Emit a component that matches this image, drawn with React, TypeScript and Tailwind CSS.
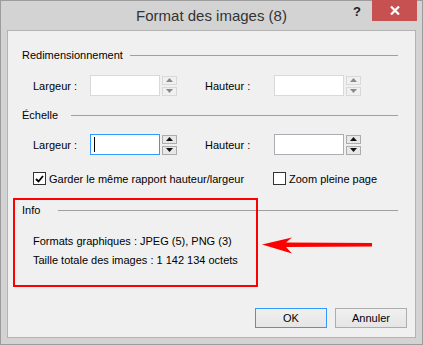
import React from "react";

function Spinner({ enabled }: { enabled: boolean }) {
  const btn = enabled
    ? "border-[#acacac] bg-[#e8e8e8]"
    : "border-[#d9d9d9] bg-[#f0f0f0]";
  const fill = enabled ? "#111111" : "#8a8a8a";
  return (
    <div className="ml-[2px] flex h-[21px] w-[15px] flex-col justify-center gap-[2px]">
      <div className={`flex h-[9px] items-center justify-center border ${btn}`}>
        <svg width="7" height="4" viewBox="0 0 7 4">
          <polygon points="3.5,0 7,4 0,4" fill={fill} />
        </svg>
      </div>
      <div className={`flex h-[9px] items-center justify-center border ${btn}`}>
        <svg width="7" height="4" viewBox="0 0 7 4">
          <polygon points="0,0 7,0 3.5,4" fill={fill} />
        </svg>
      </div>
    </div>
  );
}

function GroupHeader({ label, w }: { label: string; w: string }) {
  return (
    <div className="mr-[9px] flex h-4 items-center">
      <span className={`${w} shrink-0 whitespace-nowrap`}>{label}</span>
      <div className="h-px flex-1 bg-[#a0a0a0]" />
    </div>
  );
}

export default function App() {
  return (
    <div className="relative flex h-[345px] w-[423px] flex-col border border-[#9c9c9c] bg-[#d3d3d3] font-['Liberation_Sans',Arial,sans-serif]">
      {/* Title bar */}
      <div className="flex h-[29px] shrink-0 items-center justify-center pt-[2px] text-[15px] text-[#333333]">
        Format des images (8)
      </div>
      <div className="absolute left-[352px] top-[3px] text-[13px] font-bold leading-[16px] text-[#222222]">
        ?
      </div>
      <div className="absolute right-[5px] top-[-1px] flex h-[21px] w-[45px] items-center justify-center bg-[#c75050]">
        <svg width="10" height="9" viewBox="0 0 10 9">
          <path d="M1 0.5 L9 8.5 M9 0.5 L1 8.5" stroke="#ffffff" strokeWidth="2.2" />
        </svg>
      </div>

      {/* Client panel */}
      <div className="mx-[6px] mb-[6px] flex flex-1 flex-col border border-[#b3b3b3] bg-[#f0f0f0] pb-[9px] pl-[14px] pr-[8px] pt-[16px] text-[11px] leading-4 text-black">
        <GroupHeader label="Redimensionnement" w="w-[108px]" />

        <div className="mt-3 flex h-[21px] items-center pl-[11px]">
          <span className="w-[57px] shrink-0">Largeur :</span>
          <div className="h-[21px] w-[70px] border border-[#d9d9d9] bg-white" />
          <Spinner enabled={false} />
          <span className="ml-[28px] w-[69px] shrink-0">Hauteur :</span>
          <div className="h-[21px] w-[70px] border border-[#d9d9d9] bg-white" />
          <Spinner enabled={false} />
        </div>

        <div className="mt-[11px]">
          <GroupHeader label="Échelle" w="w-[49px]" />
        </div>

        <div className="mt-[11px] flex h-[21px] items-center pl-[11px]">
          <span className="w-[57px] shrink-0">Largeur :</span>
          <div className="flex h-[21px] w-[70px] items-center border border-[#3399ff] bg-white pl-[3px]">
            <div className="h-[15px] w-px bg-black" />
          </div>
          <Spinner enabled={true} />
          <span className="ml-[28px] w-[69px] shrink-0">Hauteur :</span>
          <div className="h-[21px] w-[70px] border border-[#abadb3] bg-white" />
          <Spinner enabled={true} />
        </div>

        <div className="mt-[17px] flex h-[13px] items-center pl-[11px]">
          <div className="flex w-[240px] shrink-0 items-center">
            <div className="flex h-[13px] w-[13px] items-center justify-center border border-[#333333] bg-white">
              <svg width="9" height="8" viewBox="0 0 9 8">
                <path d="M1 4 L3.5 6.5 L8 1" stroke="#000000" strokeWidth="1.8" fill="none" />
              </svg>
            </div>
            <span className="ml-[3px] whitespace-nowrap">Garder le même rapport hauteur/largeur</span>
          </div>
          <div className="h-[13px] w-[13px] border border-[#333333] bg-white" />
          <span className="ml-[3px] whitespace-nowrap">Zoom pleine page</span>
        </div>

        <div className="mt-[17px]">
          <GroupHeader label="Info" w="w-[36px]" />
        </div>

        <div className="mt-[15px] flex h-4 items-center pl-[11px] whitespace-nowrap">
          Formats graphiques : JPEG (5), PNG (3)
        </div>
        <div className="mt-[3px] flex h-4 items-center pl-[11px] whitespace-nowrap">
          Taille totale des images : 1 142 134 octets
        </div>

        <div className="mt-auto flex justify-end gap-2">
          <button className="h-[20px] w-[72px] border border-[#3399ff] bg-gradient-to-b from-[#f0f0f0] to-[#e5e5e5] text-[11px] leading-none">
            OK
          </button>
          <button className="h-[20px] w-[72px] border border-[#adadad] bg-gradient-to-b from-[#f0f0f0] to-[#e5e5e5] text-[11px] leading-none">
            Annuler
          </button>
        </div>
      </div>

      {/* Annotation */}
      <div className="pointer-events-none absolute left-[12px] top-[197px] h-[89px] w-[245px] border-2 border-[#ff0000]" />
      <svg
        className="pointer-events-none absolute left-[260px] top-[235px]"
        width="114"
        height="20"
        viewBox="0 0 114 20"
      >
        <polygon
          points="1,8.5 31,1.5 25,6.5 111,7 111,10.5 25,11 31,17.5"
          fill="#ff0000"
        />
      </svg>
    </div>
  );
}
